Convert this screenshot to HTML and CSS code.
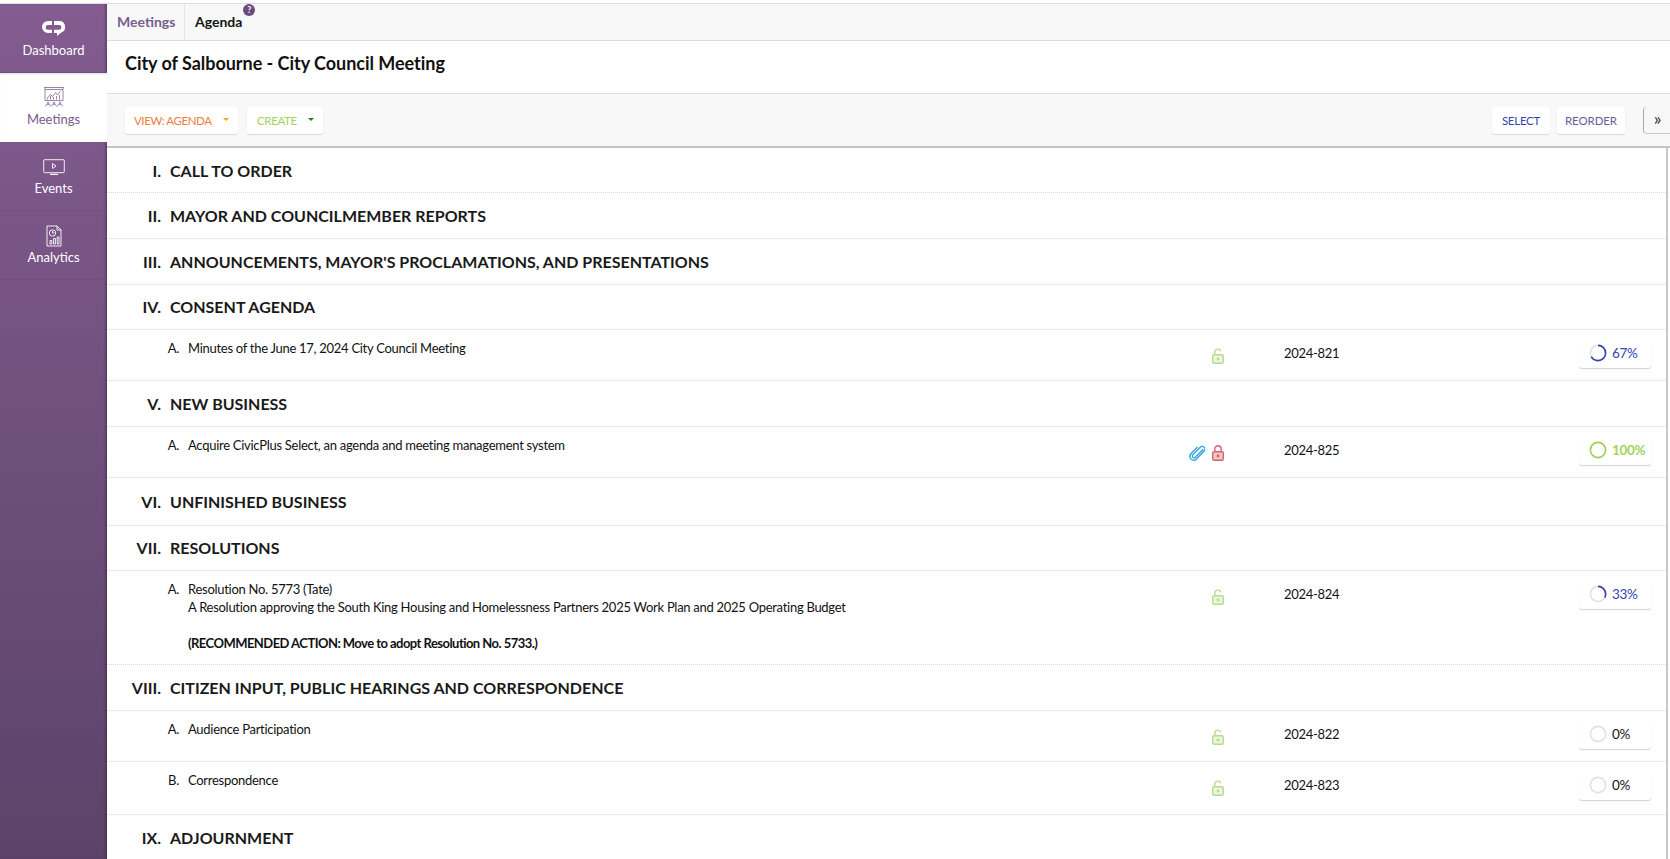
FILE: index.html
```html
<!DOCTYPE html>
<html lang="en">
<head>
<meta charset="utf-8">
<title>City of Salbourne - City Council Meeting</title>
<link rel="stylesheet" href="styles.css">
</head>
<body>
<svg class="defs" width="0" height="0" aria-hidden="true">
  <symbol id="lock-open" viewBox="0 0 12 16"><path d="M2.800 7V4.200a3.200 3.200 0 0 1 6.200-1" fill="none" stroke="currentColor" stroke-width="1.400"/><rect x=".7" y="6.700" width="10.600" height="8.600" rx="1.600" fill="currentColor" fill-opacity=".3" stroke="currentColor" stroke-width="1.400"/><circle cx="6" cy="11" r="1.400" fill="currentColor"/></symbol>
  <symbol id="lock-closed" viewBox="0 0 12 16"><path d="M2.800 7V4a3.200 3.200 0 0 1 6.400 0v3" fill="none" stroke="currentColor" stroke-width="1.400"/><rect x=".7" y="6.700" width="10.600" height="8.600" rx="1.600" fill="currentColor" fill-opacity=".35" stroke="currentColor" stroke-width="1.400"/><circle cx="6" cy="11" r="1.400" fill="currentColor"/></symbol>
</svg>
<div class="app">
  <nav class="sidebar">
    <a class="nav-item">
      <svg class="nav-icon logo" viewBox="0 0 23 15"><path d="M10 0H6a6 6 0 0 0 0 12h4V8.800H6a2.400 2.400 0 0 1 0-4.800h4z" fill="#fff"/><path d="M12 0h5a6 6 0 0 1 2 11.700L15 15v-3h-3V8.800h5a2.400 2.400 0 0 0 0-4.800h-5z" fill="#fff"/></svg>
      <span>Dashboard</span>
    </a>
    <a class="nav-item active">
      <svg class="nav-icon board" viewBox="0 0 22 20" fill="none" stroke="#8f76a2" stroke-width=".9"><path d="M1 .5h20M2 .5v13h18V.5"/><path d="M2 2.500h18"/><path d="M4.500 11l3-3.500 2 2 3-4 2 2.500 3-4"/><path d="M4.500 12.500V11M7.500 12.500V9M10.500 12.500V10M13.500 12.500V9M16.500 12.500V8"/><circle cx="5" cy="16" r=".9"/><circle cx="11" cy="16" r=".9"/><circle cx="17" cy="16" r=".9"/><path d="M2.800 19.500v-.8a2.200 1.500 0 0 1 4.400 0v.8M8.800 19.500v-.8a2.200 1.500 0 0 1 4.400 0v.8M14.800 19.500v-.8a2.200 1.500 0 0 1 4.400 0v.8"/></svg>
      <span>Meetings</span>
    </a>
    <a class="nav-item">
      <svg class="nav-icon screen" viewBox="0 0 22 16" fill="none" stroke="#fff" stroke-width=".9"><rect x=".7" y=".7" width="20.600" height="13" rx="1"/><path d="M9.500 4.500l3.500 2.500-3.500 2.500z"/><path d="M7 15.400h8" stroke-width="1.200"/></svg>
      <span>Events</span>
    </a>
    <a class="nav-item">
      <svg class="nav-icon report" viewBox="0 0 16 22" fill="none" stroke="#fff" stroke-width=".9"><path d="M1 1h10l4 4v16H1z"/><path d="M11 1v4h4"/><circle cx="6.500" cy="8" r="3.200"/><path d="M6.500 6v2h2"/><path d="M4 15.500h1.800V19H4zM7.600 13.500h1.800V19H7.600zM11.200 12h1.800v7h-1.800z"/></svg>
      <span>Analytics</span>
    </a>
  </nav>
  <main class="main">
    <header class="tabs">
      <a class="tab tab-parent">Meetings</a>
      <a class="tab tab-current">Agenda<span class="help">?</span></a>
    </header>
    <h1 class="title">City of Salbourne - City Council Meeting</h1>
    <div class="toolbar">
      <button class="btn btn-view">VIEW: AGENDA<i class="caret caret-orange"></i></button>
      <button class="btn btn-create">CREATE<i class="caret caret-green"></i></button>
      <span class="spacer"></span>
      <button class="btn btn-select">SELECT</button>
      <button class="btn btn-reorder">REORDER</button>
      <button class="expand">»</button>
    </div>
    <section class="agenda">
      <div class="heading first"><span class="num">I.</span><span>CALL TO ORDER</span></div>
      <div class="heading"><span class="num">II.</span><span>MAYOR AND COUNCILMEMBER REPORTS</span></div>
      <div class="heading"><span class="num">III.</span><span>ANNOUNCEMENTS, MAYOR'S PROCLAMATIONS, AND PRESENTATIONS</span></div>
      <div class="heading"><span class="num">IV.</span><span>CONSENT AGENDA</span></div>
      <div class="item">
        <span class="letter">A.</span>
        <div class="text">Minutes of the June 17, 2024 City Council Meeting</div>
        <div class="icons"><svg class="lock open"><use href="#lock-open"/></svg></div>
        <span class="code">2024-821</span>
        <button class="status progress"><svg class="ring" viewBox="0 0 20 20"><circle class="ring-bg" cx="10" cy="10" r="8.500"/><circle class="ring-fg" cx="10" cy="10" r="8.500" pathLength="100" stroke-dasharray="67 100"/></svg>67%</button>
      </div>
      <div class="heading"><span class="num">V.</span><span>NEW BUSINESS</span></div>
      <div class="item">
        <span class="letter">A.</span>
        <div class="text">Acquire CivicPlus Select, an agenda and meeting management system</div>
        <div class="icons">
          <svg class="clip" viewBox="0 0 16 16" fill="none" stroke="#2a9fe8" stroke-width="1.300"><path d="M14.300 4.300L6.300 12.300a1.700 1.700 0 0 1-2.500-2.400l7.400-7.700a2.700 2.700 0 0 1 3.900 3.800l-7.900 8.200a3.800 3.800 0 0 1-5.500-5.200L8.500 2"/></svg>
          <svg class="lock closed"><use href="#lock-closed"/></svg>
        </div>
        <span class="code">2024-825</span>
        <button class="status done"><svg class="ring" viewBox="0 0 20 20"><circle class="ring-fg full" cx="10" cy="10" r="8.500"/></svg>100%</button>
      </div>
      <div class="heading tall"><span class="num">VI.</span><span>UNFINISHED BUSINESS</span></div>
      <div class="heading"><span class="num">VII.</span><span>RESOLUTIONS</span></div>
      <div class="item item-long">
        <span class="letter">A.</span>
        <div class="text">Resolution No. 5773 (Tate)<br>A Resolution approving the South King Housing and Homelessness Partners 2025 Work Plan and 2025 Operating Budget<br><br><strong>(RECOMMENDED ACTION: Move to adopt Resolution No. 5733.)</strong></div>
        <div class="icons"><svg class="lock open"><use href="#lock-open"/></svg></div>
        <span class="code">2024-824</span>
        <button class="status progress"><svg class="ring" viewBox="0 0 20 20"><circle class="ring-bg" cx="10" cy="10" r="8.500"/><circle class="ring-fg" cx="10" cy="10" r="8.500" pathLength="100" stroke-dasharray="33 100"/></svg>33%</button>
      </div>
      <div class="heading"><span class="num">VIII.</span><span>CITIZEN INPUT, PUBLIC HEARINGS AND CORRESPONDENCE</span></div>
      <div class="item">
        <span class="letter">A.</span>
        <div class="text">Audience Participation</div>
        <div class="icons"><svg class="lock open"><use href="#lock-open"/></svg></div>
        <span class="code">2024-822</span>
        <button class="status"><svg class="ring" viewBox="0 0 20 20"><circle class="ring-bg" cx="10" cy="10" r="8.500"/></svg>0%</button>
      </div>
      <div class="item item-tall">
        <span class="letter">B.</span>
        <div class="text">Correspondence</div>
        <div class="icons"><svg class="lock open"><use href="#lock-open"/></svg></div>
        <span class="code">2024-823</span>
        <button class="status"><svg class="ring" viewBox="0 0 20 20"><circle class="ring-bg" cx="10" cy="10" r="8.500"/></svg>0%</button>
      </div>
      <div class="heading last"><span class="num">IX.</span><span>ADJOURNMENT</span></div>
    </section>
  </main>
</div>
</body>
</html>
```

FILE: styles.css
```css
* { box-sizing: border-box; }
html, body { margin: 0; height: 100%; overflow: hidden; }
body {
  font-family: Lato, "Liberation Sans", sans-serif;
  font-size: 13px;
  color: #111;
  background: #fff;
  padding-top: 3px;
}
.defs { position: absolute; }
.app {
  display: flex;
  height: 856px;
  border-top: 1px solid #ddd;
}
.sidebar {
  flex: 0 0 107px;
  background: linear-gradient(#845c90, #5b4369);
  box-shadow: inset -3px 0 3px -2px rgba(40, 20, 50, .5);
  display: flex;
  flex-direction: column;
}
.nav-item {
  height: 69px;
  color: #fff;
  display: flex;
  flex-direction: column;
  align-items: center;
  justify-content: flex-end;
  padding-bottom: 14px;
  font-size: 13px;
  line-height: 16px;
  border-bottom: 1px solid #6f5080;
}
.nav-item.active {
  background: #fff;
  color: #7a5a90;
  border-bottom: 0;
  padding-bottom: 15px;
  box-shadow: inset 0 2px 2px -1px #ddd;
}
.nav-icon { display: block; }
.logo { width: 23px; height: 15px; margin-bottom: 6px; }
.board { width: 22px; height: 20px; margin-bottom: 4px; }
.screen { width: 22px; height: 16px; margin-bottom: 5px; }
.report { width: 16px; height: 22px; margin-bottom: 2px; }
.main { flex: 1; min-width: 0; display: flex; flex-direction: column; }
.tabs {
  height: 37px;
  flex: none;
  background: #f8f8f8;
  border-bottom: 1px solid #ddd;
  display: flex;
  align-items: stretch;
  font-size: 14px;
  padding-bottom: 2px;
}
.tab { display: flex; align-items: center; font-weight: 700; position: relative; }
.tab-parent { color: #75608f; padding: 0 9px 2px 10px; width: 78px; border-right: 1px solid #e6e6e6; margin-bottom: -2px; }
.tab-current { color: #151515; padding-left: 10px; }
.help {
  position: absolute;
  top: 0;
  right: -13px;
  width: 12px;
  height: 12px;
  border-radius: 50%;
  background: #6b4a7d;
  color: #fff;
  font-size: 9px;
  line-height: 12px;
  text-align: center;
}
.title {
  margin: 0;
  flex: none;
  height: 53px;
  padding: 0 18px;
  font-size: 18px;
  letter-spacing: -.03px;
  line-height: 45px;
  font-weight: 700;
  color: #111;
  border-bottom: 1px solid #ddd;
}
.toolbar {
  flex: none;
  height: 54px;
  background: #f8f8f8;
  border-bottom: 2px solid #c4c4c4;
  display: flex;
  align-items: center;
  gap: 9px;
  padding-left: 18px;
  padding-top: 1px;
}
.spacer { flex: 1; }
.btn {
  height: 27px;
  border: 0;
  border-radius: 3px;
  background: #fff;
  box-shadow: 0 1px 1px #d8d8d8;
  font: 400 11.5px Lato, "Liberation Sans", sans-serif;
  letter-spacing: -.35px;
  padding: 0 9px 0 10px;
  display: flex;
  align-items: center;
}
.btn-view { color: #ee7d3c; width: 113px; padding-left: 9px; letter-spacing: -.42px; }
.btn-create { color: #a3d35a; width: 76px; }
.btn-select { color: #3744ad; width: 58px; justify-content: center; padding: 0; margin-right: -2px; letter-spacing: -.25px; }
.btn-reorder { color: #6e5a9a; width: 68px; justify-content: center; padding: 0; letter-spacing: -.1px; }
.caret {
  width: 0;
  height: 0;
  border: 3.5px solid transparent;
  border-bottom: 0;
  margin-left: auto;
  margin-top: -3px;
}
.caret-orange { border-top-color: #f9a51a; }
.caret-green { border-top-color: #0d8a12; }
.expand {
  width: 28px;
  height: 27px;
  margin-left: 9px;
  margin-right: -1px;
  padding: 0 0 4px;
  border: 0;
  border-left: 1px solid #aaa;
  border-bottom: 1px solid #ccc;
  border-radius: 4px 0 0 4px;
  background: #f8f8f8;
  font: 400 18px Lato, "Liberation Sans", sans-serif;
  color: #333;
}
.agenda {
  flex: 1;
  width: 1561px;
  border-right: 2px solid #c8c8c8;
  overflow: hidden;
}
.heading {
  height: 45.750px;
  display: grid;
  grid-template-columns: 54px 1fr;
  column-gap: 9px;
  align-items: center;
  font-size: 16px;
  font-weight: 700;
  color: #1a1a1a;
  border-bottom: 1px dotted #d6d6d6;
}
.heading.first { height: 45px; }
.heading.tall { height: 47.500px; }
.heading.last { border-bottom: 0; }
.num { text-align: right; }
.item {
  height: 51px;
  display: grid;
  grid-template-columns: 72px 1002px 43px 355px 72px;
  align-items: start;
  padding-top: 10px;
  line-height: 17.800px;
  letter-spacing: -.28px;
  border-bottom: 1px dotted #d6d6d6;
}
.item-long { height: 94px; }
.item-tall { height: 52.500px; }
.item strong { letter-spacing: -.54px; }
.letter { text-align: right; }
.text { padding-left: 9px; }
.icons {
  display: flex;
  justify-content: flex-end;
  align-items: flex-end;
  gap: 7px;
  height: 16px;
  margin-top: 8px;
}
.lock { width: 12px; height: 16px; }
.lock.open { color: #b7dd8c; }
.lock.closed { color: #d9616b; }
.clip { width: 16px; height: 16px; }
.code { padding-top: 5px; padding-left: 60px; }
.status {
  height: 28px;
  padding: 0 0 2px 10px;
  border: 0;
  border-radius: 3px;
  background: #fff;
  box-shadow: 0 1px 1px #d0d0d0;
  display: flex;
  align-items: center;
  gap: 5px;
  font: 400 13.5px Lato, "Liberation Sans", sans-serif;
  letter-spacing: -.3px;
  color: #111;
}
.status.progress { color: #3744ad; }
.status.done { color: #a3d35a; font-weight: 700; }
.ring { width: 18px; height: 18px; transform: rotate(-90deg); flex: none; }
.ring-bg { fill: none; stroke: #e2e2e2; stroke-width: 1.800; }
.ring-fg { fill: none; stroke: #3744ad; stroke-width: 1.800; }
.ring-fg.full { stroke: #9ccf55; }
```
